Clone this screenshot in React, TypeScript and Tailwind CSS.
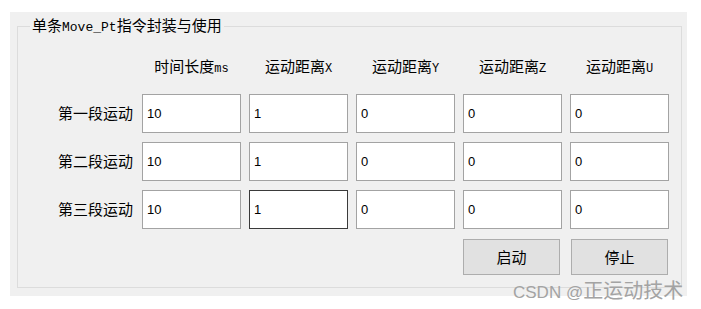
import { useState } from "react"

const cjk = { fontFamily: '"Noto Sans CJK SC", "Liberation Sans", sans-serif' }
const mono = { fontFamily: '"Liberation Mono", "Noto Sans CJK SC", monospace' }
const sans = { fontFamily: '"Liberation Sans", "Noto Sans CJK SC", sans-serif' }

const headers = [
  { zh: "时间长度", en: "ms" },
  { zh: "运动距离", en: "X" },
  { zh: "运动距离", en: "Y" },
  { zh: "运动距离", en: "Z" },
  { zh: "运动距离", en: "U" },
]

const rows = [
  { label: "第一段运动", values: ["10", "1", "0", "0", "0"] },
  { label: "第二段运动", values: ["10", "1", "0", "0", "0"] },
  { label: "第三段运动", values: ["10", "1", "0", "0", "0"] },
]

export default function App() {
  const [data, setData] = useState(rows.map((r) => r.values))

  const handleChange = (ri: number, ci: number, v: string) => {
    setData((prev) => prev.map((row, i) => (i === ri ? row.map((c, j) => (j === ci ? v : c)) : row)))
  }

  return (
    <div className="relative w-[701px] h-[309px] bg-white pt-[12px]" style={cjk}>
      <div className="ml-[10px] pt-[3px] pl-[7px] w-[677px] h-[284px] bg-[#f0f0f0]">
        <fieldset className="w-[665px] h-[273px] border border-[#dcdcdc] m-0 p-0">
          <legend className="ml-[12px] px-[2px] text-[15px] leading-[20px] text-black">
            单条<span className="text-[13px]" style={mono}>Move_Pt</span>指令封装与使用
          </legend>

          <div className="flex pt-[18px]">
            <div className="w-[124px]" />
            <div className="flex gap-[8px]">
              {headers.map((h, i) => (
                <div key={i} className="w-[99px] text-center text-[15px] leading-[20px] text-black">
                  {h.zh}
                  <span className="text-[12px]" style={mono}>
                    {h.en}
                  </span>
                </div>
              ))}
            </div>
          </div>

          <div className="flex flex-col gap-[9px] mt-[15px]">
            {rows.map((row, ri) => (
              <div key={ri} className="flex items-center">
                <div className="w-[124px] pr-[9px] text-right text-[15px] text-black">{row.label}</div>
                <div className="flex gap-[8px]">
                  {data[ri].map((v, ci) => (
                    <input
                      key={ci}
                      value={v}
                      onChange={(e) => handleChange(ri, ci, e.target.value)}
                      className={`w-[99px] h-[39px] bg-white pl-[4px] text-[13px] text-black outline-none border ${
                        ri === 2 && ci === 1 ? "border-[#3a3a3a]" : "border-[#a3a3a3]"
                      }`}
                      style={sans}
                    />
                  ))}
                </div>
              </div>
            ))}
          </div>

          <div className="flex mt-[10px] pl-[445px] gap-[11px]">
            <button className="w-[97px] h-[36px] bg-[#e1e1e1] border border-[#adadad] text-[15px] text-black">
              启动
            </button>
            <button className="w-[97px] h-[36px] bg-[#e1e1e1] border border-[#adadad] text-[15px] text-black">
              停止
            </button>
          </div>
        </fieldset>
      </div>

      <div className="absolute left-[513px] top-[280px] flex items-baseline leading-none text-[#a3a3a3] whitespace-nowrap">
        <span className="text-[17px]" style={sans}>
          CSDN @
        </span>
        <span className="text-[20px]" style={cjk}>
          正运动技术
        </span>
      </div>
    </div>
  )
}
